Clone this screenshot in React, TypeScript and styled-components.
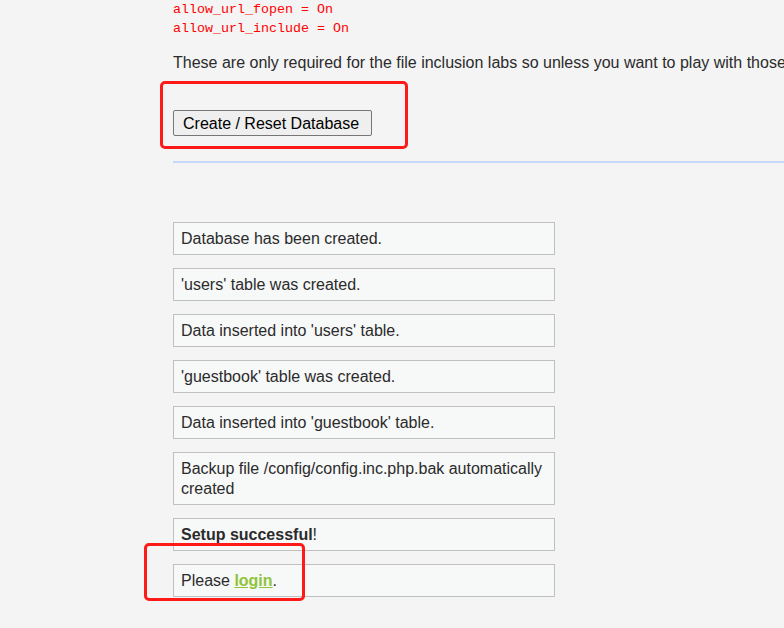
import React from "react";
import styled, { createGlobalStyle } from "styled-components";

const Global = createGlobalStyle`
  html, body { margin: 0; padding: 0; background: #f4f4f4; overflow: hidden; }
  body { font-family: "Liberation Sans", Arial, sans-serif; color: #2b2b2b; }
`;

const Page = styled.div`
  position: relative;
  width: 784px;
  height: 628px;
  overflow: hidden;
`;

const Content = styled.div`
  margin-left: 173px;
  width: 1100px;
  display: flex;
  flex-direction: column;
`;

const Code = styled.pre`
  margin: 0;
  font-family: "Liberation Mono", "Courier New", monospace;
  font-size: 13.33px;
  line-height: 19px;
  color: #ff0000;
`;

const Para = styled.p`
  margin: 15px 0 0;
  font-size: 16px;
  line-height: 20px;
  white-space: nowrap;
`;

const Form = styled.form`
  margin-top: 37px;
`;

const Button = styled.button`
  font-family: "Liberation Sans", Arial, sans-serif;
  font-size: 16px;
  line-height: 19px;
  color: #000;
  background: #efefef;
  border: 1px solid #767676;
  border-radius: 2px;
  padding: 2px 9px 2px 9px;
  width: 199px;
  height: 26px;
  text-align: left;
`;

const Rule = styled.div`
  margin-top: 25px;
  height: 2px;
  width: 100%;
  background: #c6d9fa;
`;

const Messages = styled.div`
  margin-top: 59px;
  display: flex;
  flex-direction: column;
  gap: 13px;
`;

const Message = styled.div`
  width: 382px;
  box-sizing: border-box;
  background: #f7f8f8;
  border: 1px solid #c0c0c0;
  padding: 6px 7px 5px;
  font-size: 16px;
  line-height: 20px;
  color: #2b2b2b;
`;

const Link = styled.a`
  color: #8fc43a;
  font-weight: bold;
  text-decoration: underline;
`;

const Mark = styled.div<{ $x: number; $y: number; $w: number; $h: number }>`
  position: absolute;
  left: ${(p) => p.$x}px;
  top: ${(p) => p.$y}px;
  width: ${(p) => p.$w}px;
  height: ${(p) => p.$h}px;
  box-sizing: border-box;
  border: 3px solid #ff1a1a;
  border-radius: 5px;
  pointer-events: none;
`;

export default function App() {
  return (
    <>
      <Global />
      <Page>
        <Content>
          <Code>{"allow_url_fopen = On\nallow_url_include = On"}</Code>
          <Para>
            These are only required for the file inclusion labs so unless you want to play with those, you can ignore them.
          </Para>
          <Form onSubmit={(e) => e.preventDefault()}>
            <Button type="submit">Create / Reset Database</Button>
          </Form>
          <Rule />
          <Messages>
            <Message>Database has been created.</Message>
            <Message>'users' table was created.</Message>
            <Message>Data inserted into 'users' table.</Message>
            <Message>'guestbook' table was created.</Message>
            <Message>Data inserted into 'guestbook' table.</Message>
            <Message>Backup file /config/config.inc.php.bak automatically created</Message>
            <Message>
              <b>Setup successful</b>!
            </Message>
            <Message>
              Please <Link href="#">login</Link>.
            </Message>
          </Messages>
        </Content>
        <Mark $x={160} $y={81} $w={248} $h={68} />
        <Mark $x={144} $y={543} $w={161} $h={58} />
      </Page>
    </>
  );
}
